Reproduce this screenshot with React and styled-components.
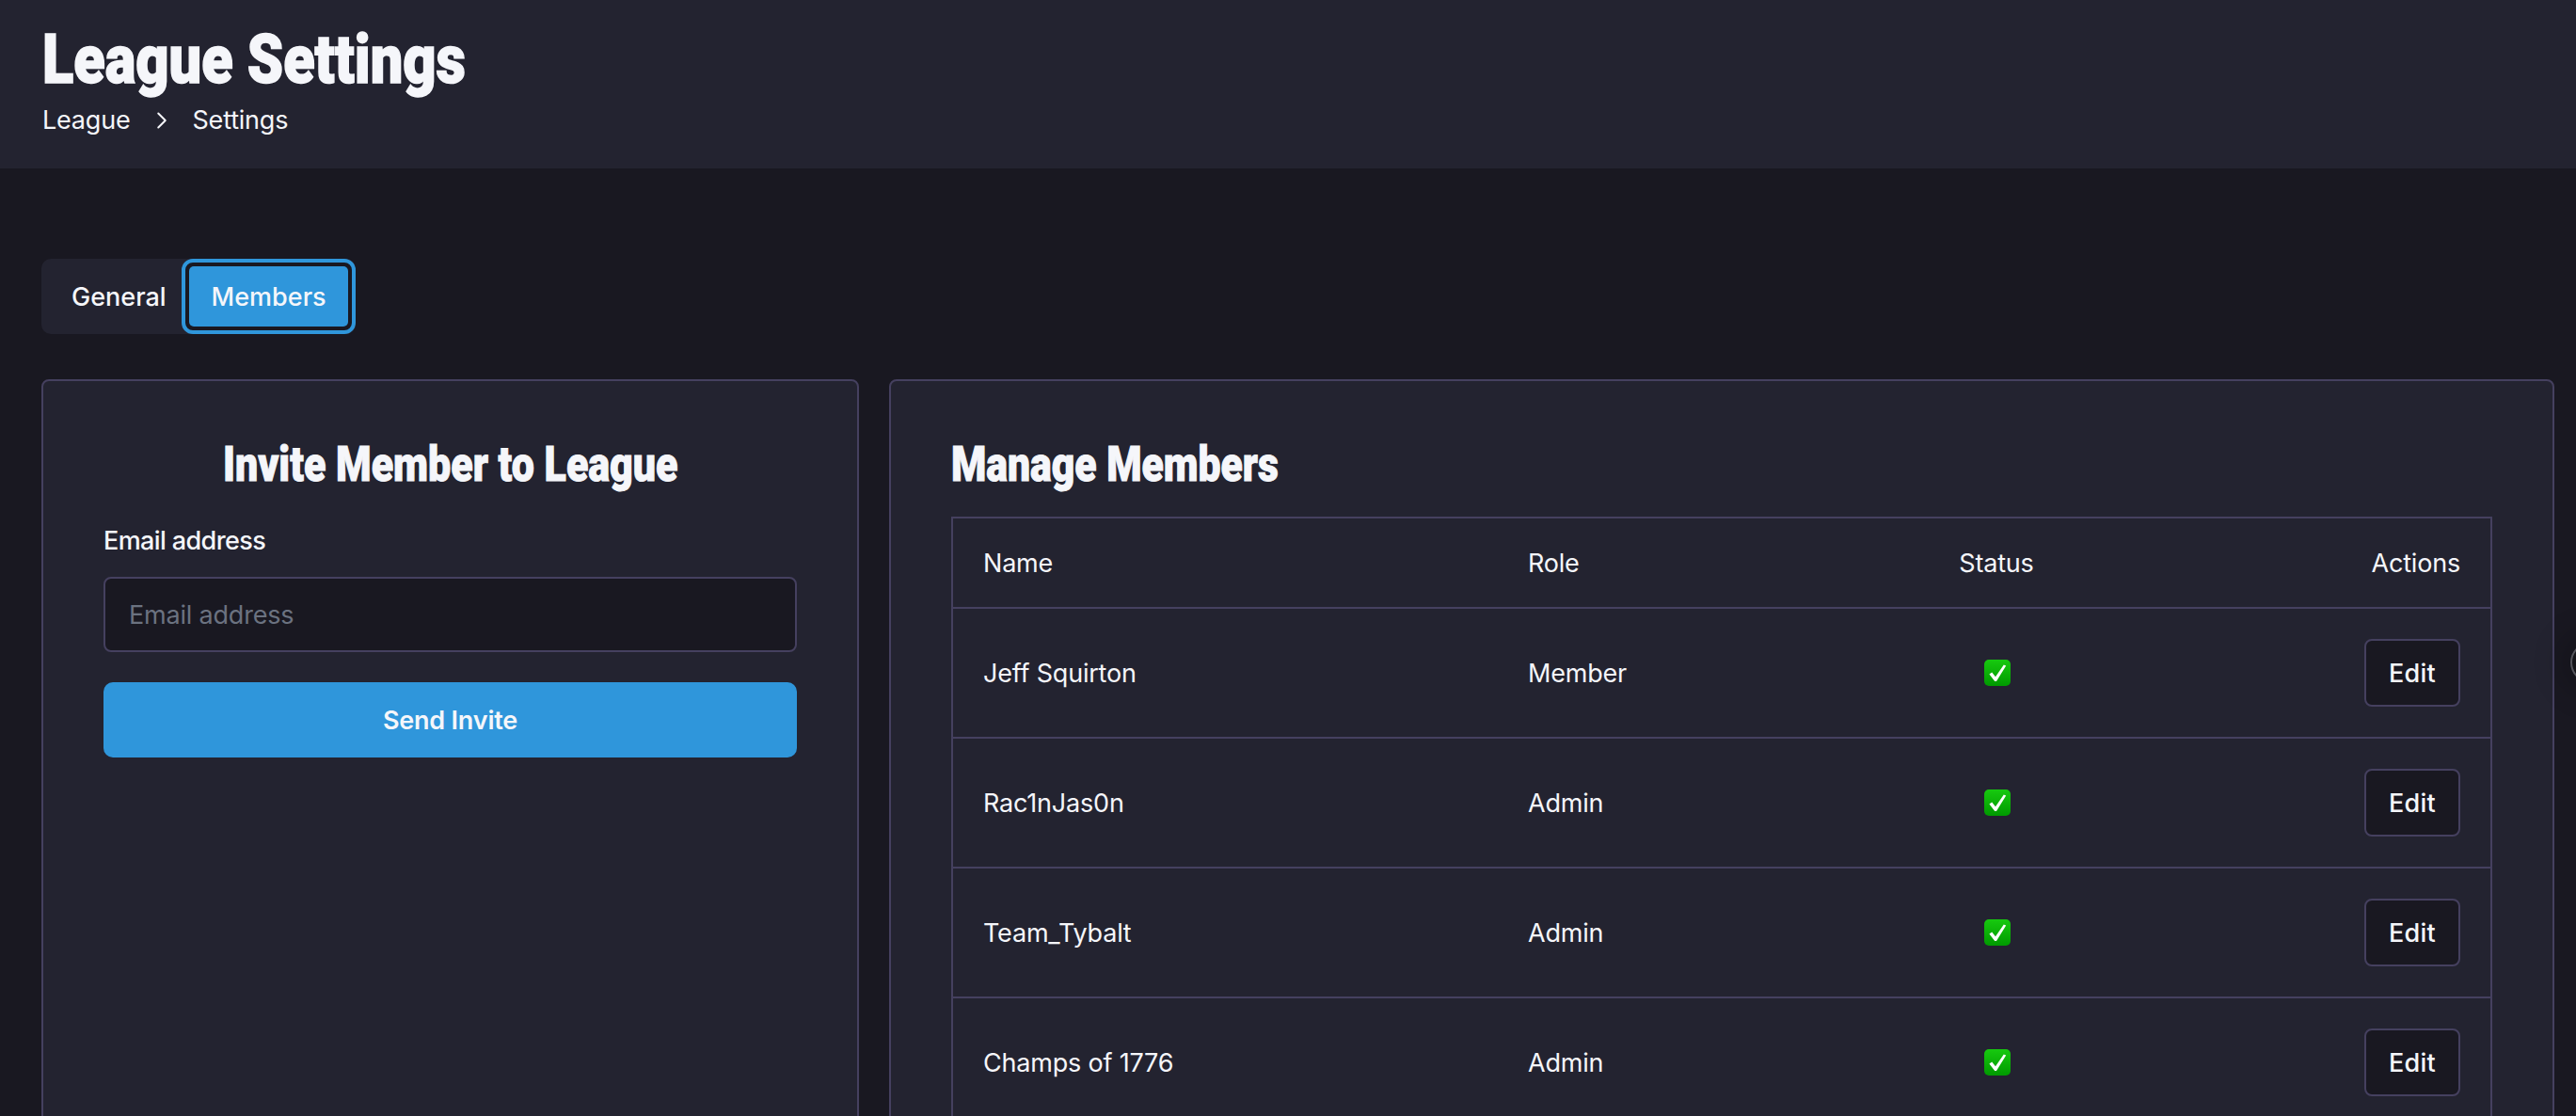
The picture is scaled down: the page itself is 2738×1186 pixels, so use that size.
import { ChevronRight } from "lucide-react";
import styled, { createGlobalStyle } from "styled-components";

const members = [
    { name: "Jeff Squirton", role: "Member" },
    { name: "Rac1nJas0n", role: "Admin" },
    { name: "Team_Tybalt", role: "Admin" },
    { name: "Champs of 1776", role: "Admin" },
];

const GlobalStyle = createGlobalStyle`
    html, body {
        margin: 0;
        height: 100%;
        overflow: hidden;
        background: #191821;
    }

    * {
        box-sizing: border-box;
    }
`;

const Page = styled.div`
    position: relative;
    height: 1186px;
    overflow: hidden;
    background: #191821;
    color: #f5f6fa;
    font-family: Inter, "Liberation Sans", sans-serif;
    font-size: 27px;
    letter-spacing: -0.2px;
`;

const Header = styled.header`
    height: 179px;
    padding: 22px 45px 0;
    background: #232330;
`;

const Display = styled.span`
    display: inline-block;
    font-family: Roboto, "Liberation Sans", sans-serif;
    font-weight: 900;
    letter-spacing: 0;
    white-space: nowrap;
    transform-origin: ${(p) => p.$origin || "left"} center;
    transform: scaleX(${(p) => p.$squeeze});
    -webkit-text-stroke: ${(p) => p.$stroke} #f5f6fa;
`;

const PageTitle = styled.h1`
    margin: 0;
    height: 80px;
    font-size: 73px;
    line-height: 80px;
`;

const Crumbs = styled.nav`
    display: flex;
    align-items: center;
    gap: 18px;
    margin-top: 6px;
    height: 40px;
    line-height: 40px;
`;

const Main = styled.main`
    padding: 96px 23px 0 44px;
`;

const TabList = styled.div`
    display: inline-flex;
    height: 80px;
    border-radius: 10px;
    background: #232330;
`;

const Tab = styled.button`
    display: flex;
    align-items: center;
    margin: 0;
    padding: ${(p) => (p.$active ? "0 23px 0 24px" : "0 16px 0 32px")};
    border: none;
    border-radius: 5px;
    background: ${(p) => (p.$active ? "#2f96db" : "transparent")};
    color: #f5f6fa;
    font: inherit;
    font-weight: 500;
    letter-spacing: 0;
    cursor: pointer;
`;

const TabRing = styled.div`
    display: flex;
    padding: 4px;
    border: 4px solid #2f96db;
    border-radius: 12px;
    background: #191821;
`;

const Columns = styled.div`
    display: grid;
    grid-template-columns: 869px 1fr;
    gap: 32px;
    margin-top: 48px;
    height: 900px;
`;

const Card = styled.section`
    padding: 56px 64px 0;
    border: 2px solid #45405f;
    border-radius: 8px;
    background: #232330;
`;

const CardTitle = styled.h2`
    margin: 0 0 ${(p) => (p.$center ? "30px" : "24px")};
    height: 64px;
    font-size: 52px;
    line-height: 64px;
    text-align: ${(p) => (p.$center ? "center" : "left")};
`;

const FieldLabel = styled.label`
    display: block;
    margin-bottom: 18px;
    line-height: 40px;
    font-weight: 500;
    letter-spacing: -0.6px;
`;

const EmailInput = styled.input`
    display: block;
    width: 100%;
    height: 80px;
    padding: 0 25px;
    border: 2px solid #45405f;
    border-radius: 8px;
    background: #191821;
    color: #f5f6fa;
    font: inherit;
    letter-spacing: inherit;
    outline: none;

    &::placeholder {
        color: #6b7280;
        opacity: 1;
    }
`;

const SubmitButton = styled.button`
    display: block;
    width: 100%;
    height: 80px;
    margin-top: 32px;
    border: none;
    border-radius: 10px;
    background: #2f96db;
    color: #f5f6fa;
    font: inherit;
    font-weight: 600;
    letter-spacing: inherit;
    cursor: pointer;
`;

const Table = styled.table`
    width: 100%;
    table-layout: fixed;
    border-collapse: collapse;
    border: 2px solid #45405f;
`;

const Row = styled.tr`
    border-bottom: 2px solid #45405f;
`;

const HeadCell = styled.th`
    width: ${(p) => p.$width};
    height: 96px;
    padding: 0 32px;
    font-weight: 400;
    text-align: ${(p) => p.$align || "left"};
`;

const Cell = styled.td`
    height: 138px;
    padding: 0 32px;
    text-align: ${(p) => p.$align || "left"};
`;

const EditButton = styled.button`
    width: 102px;
    height: 72px;
    padding: 0;
    border: 2px solid #45405f;
    border-radius: 8px;
    background: #191821;
    color: #f5f6fa;
    font: inherit;
    font-weight: 500;
    letter-spacing: 0.3px;
    vertical-align: middle;
    cursor: pointer;
`;

const CheckMark = styled.svg`
    display: inline-block;
    width: 28px;
    height: 28px;
    margin: 0 0 3px 2px;
    vertical-align: middle;
`;

const FloatingButton = styled.div`
    position: absolute;
    top: 682px;
    left: 2732px;
    width: 44px;
    height: 44px;
    border: 2px solid #55555c;
    border-radius: 50%;
    background: #141419;
    box-shadow: 0 0 30px 12px rgba(0, 0, 0, 0.18);
`;

const ApprovedIcon = () => (
    <CheckMark viewBox="0 0 28 28">
        <defs>
            <linearGradient id="approved-fill" x1="0" y1="0" x2="0" y2="1">
                <stop offset="0" stopColor="#17c90f" />
                <stop offset="1" stopColor="#009a00" />
            </linearGradient>
        </defs>
        <rect width="28" height="28" rx="5" fill="url(#approved-fill)" />
        <path d="M5.4 15.6 L8.2 13.6 L12 18.2 L20.8 5.4 L23.2 6.6 L13 23 L11.2 23 Z" fill="#fff" />
    </CheckMark>
);

const App = () => {
    return (
        <Page>
            <GlobalStyle />
            <Header>
                <PageTitle>
                    <Display $squeeze={0.84} $stroke="1.6px">League Settings</Display>
                </PageTitle>
                <Crumbs>
                    <span>League</span>
                    <ChevronRight size={30} strokeWidth={1.6} />
                    <span>Settings</span>
                </Crumbs>
            </Header>
            <Main>
                <TabList>
                    <Tab>General</Tab>
                    <TabRing>
                        <Tab $active>Members</Tab>
                    </TabRing>
                </TabList>
                <Columns>
                    <Card>
                        <CardTitle $center>
                            <Display $squeeze={0.826} $origin="center" $stroke="1px">Invite Member to League</Display>
                        </CardTitle>
                        <FieldLabel htmlFor="invite-email">Email address</FieldLabel>
                        <EmailInput id="invite-email" type="email" placeholder="Email address" />
                        <SubmitButton>Send Invite</SubmitButton>
                    </Card>
                    <Card>
                        <CardTitle>
                            <Display $squeeze={0.82} $stroke="1px">Manage Members</Display>
                        </CardTitle>
                        <Table>
                            <thead>
                                <Row>
                                    <HeadCell $width="580px">Name</HeadCell>
                                    <HeadCell $width="380px">Role</HeadCell>
                                    <HeadCell $width="300px" $align="center">Status</HeadCell>
                                    <HeadCell $align="right">Actions</HeadCell>
                                </Row>
                            </thead>
                            <tbody>
                                {members.map((member) => (
                                    <Row key={member.name}>
                                        <Cell>{member.name}</Cell>
                                        <Cell>{member.role}</Cell>
                                        <Cell $align="center"><ApprovedIcon /></Cell>
                                        <Cell $align="right"><EditButton>Edit</EditButton></Cell>
                                    </Row>
                                ))}
                            </tbody>
                        </Table>
                    </Card>
                </Columns>
            </Main>
            <FloatingButton />
        </Page>
    );
};

export default App;
